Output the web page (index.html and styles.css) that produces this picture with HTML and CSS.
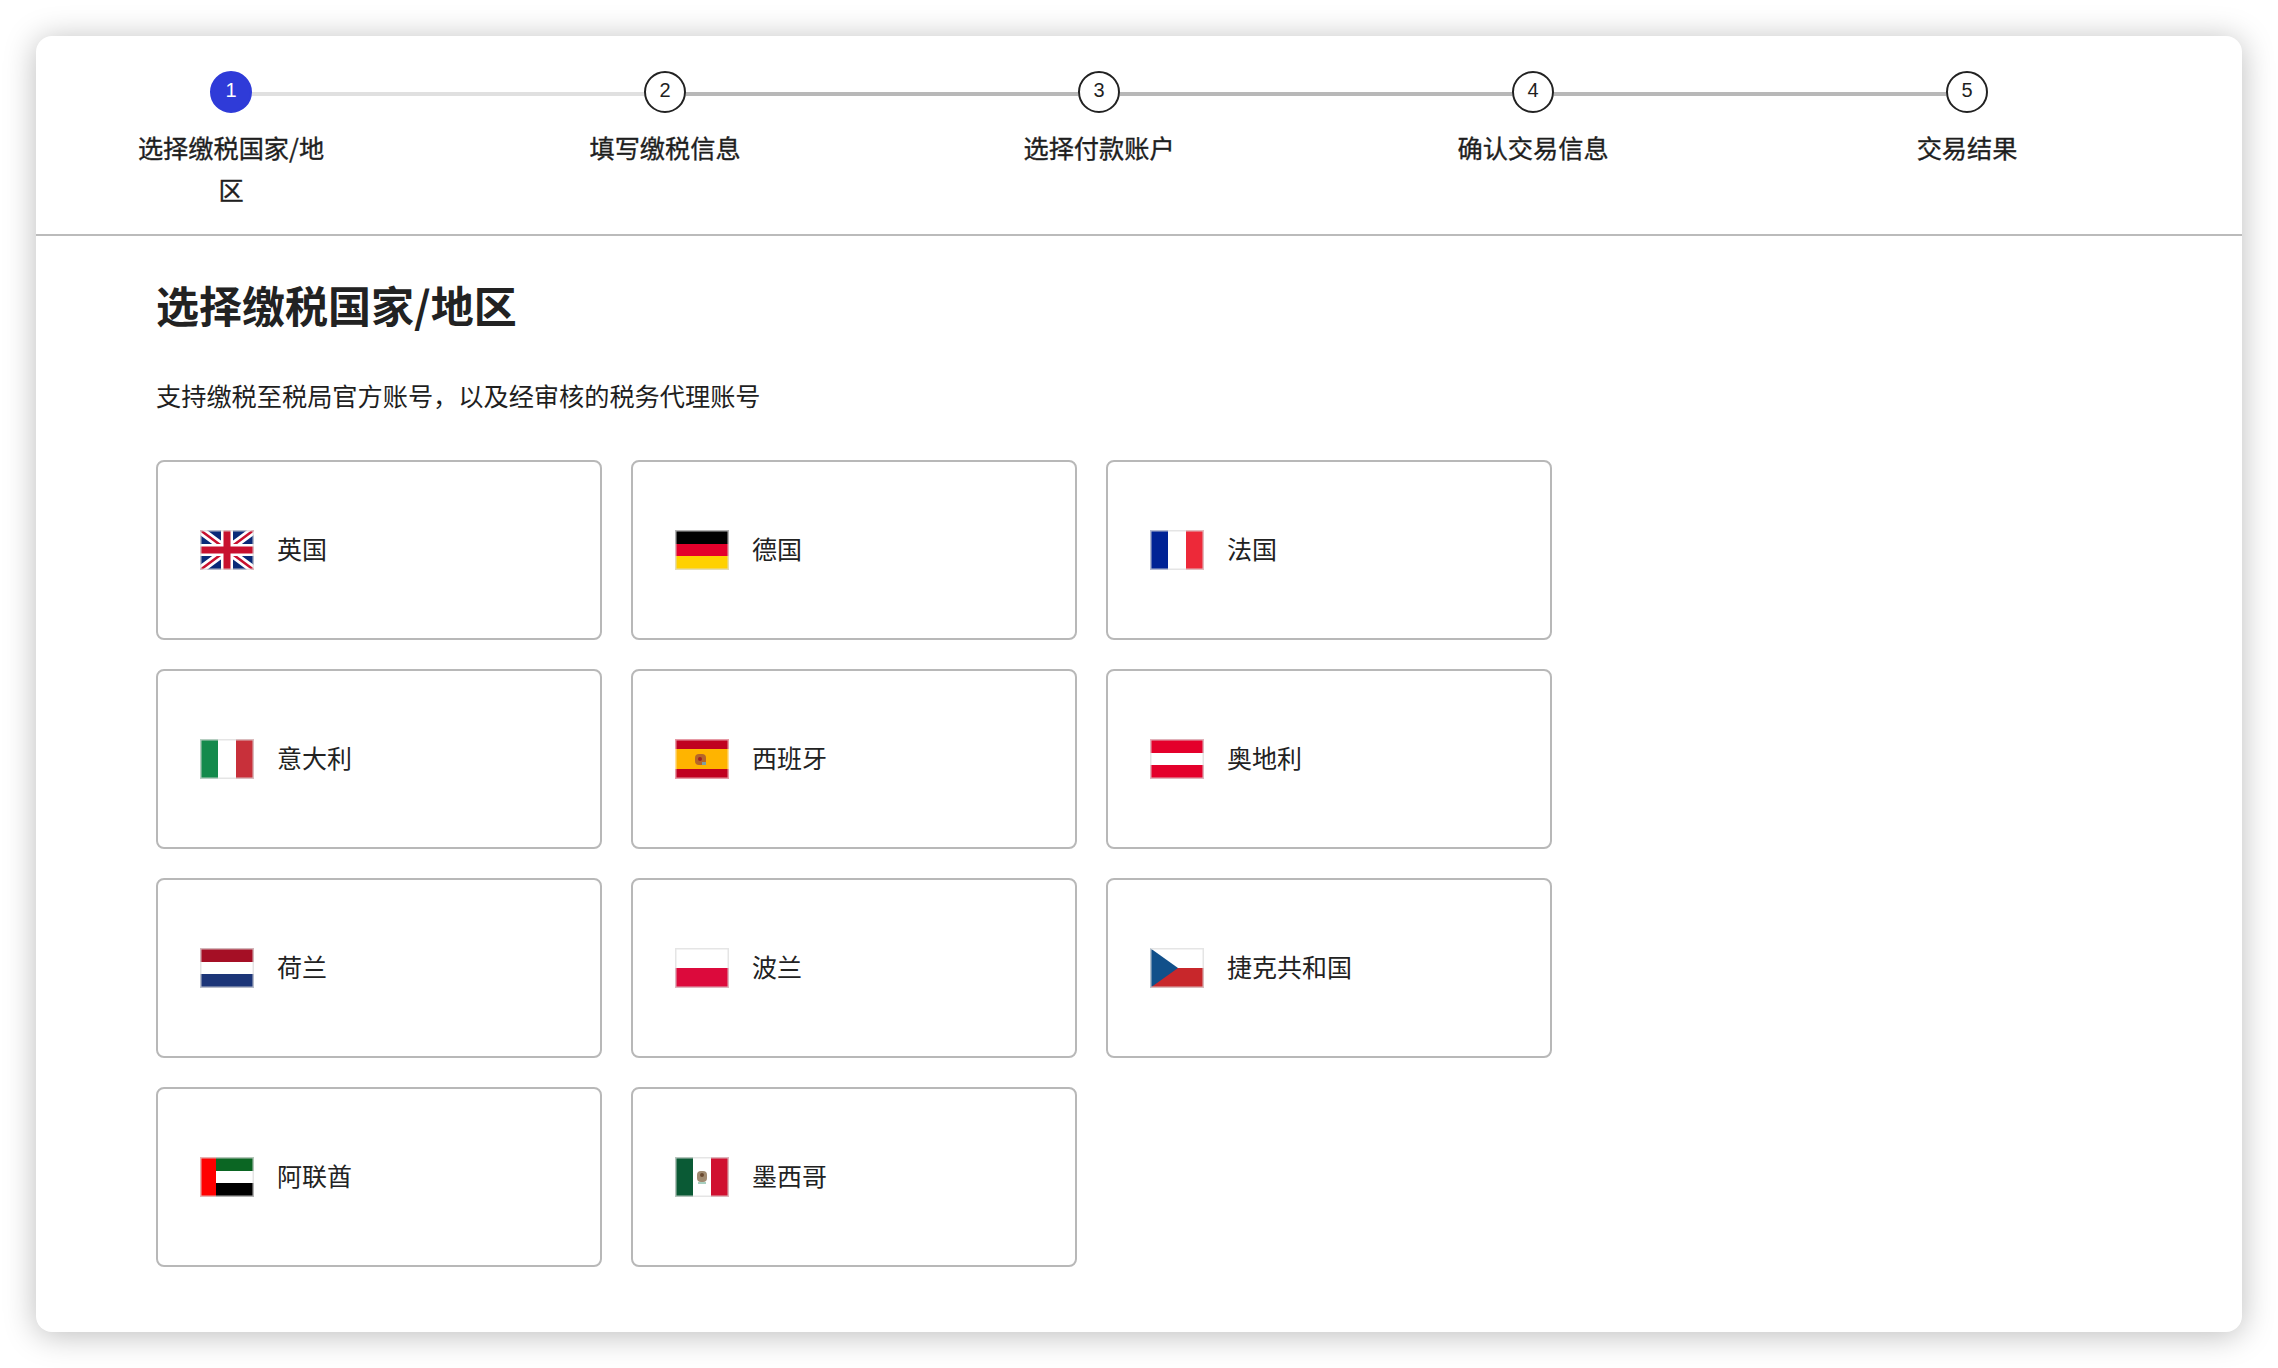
FILE: index.html
```html
<!DOCTYPE html>
<html lang="zh-CN">
<head>
<meta charset="utf-8">
<title>选择缴税国家/地区</title>
<link rel="stylesheet" href="styles.css">
</head>
<body>
<main class="window">
  <header class="steps">
    <div class="step step-active"><div class="step-dot">1</div><div class="step-label">选择缴税国家/地区</div></div>
    <div class="step"><div class="step-dot">2</div><div class="step-label">填写缴税信息</div></div>
    <div class="step"><div class="step-dot">3</div><div class="step-label">选择付款账户</div></div>
    <div class="step"><div class="step-dot">4</div><div class="step-label">确认交易信息</div></div>
    <div class="step step-last"><div class="step-dot">5</div><div class="step-label">交易结果</div></div>
  </header>
  <section class="content">
    <h1 class="title">选择缴税国家/地区</h1>
    <p class="subtitle">支持缴税至税局官方账号，以及经审核的税务代理账号</p>
    <div class="grid">
      <div class="card">
        <svg class="flag" viewBox="0 0 54 40"><rect width="54" height="40" fill="#0a2a78"/><path d="M0 0 54 40M54 0 0 40" stroke="#fff" stroke-width="8"/><path d="M0 0 27 20M54 40 27 20M54 0 27 20M0 40 27 20" stroke="#c8102e" stroke-width="2.6"/><path d="M27 0V40M0 20H54" stroke="#fff" stroke-width="12"/><path d="M27 0V40M0 20H54" stroke="#c8102e" stroke-width="7"/><rect class="edge" x=".75" y=".75" width="52.5" height="38.5"/></svg>
        <span class="name">英国</span>
      </div>
      <div class="card">
        <svg class="flag" viewBox="0 0 54 40"><rect width="54" height="14" fill="#000"/><rect y="14" width="54" height="12" fill="#e4002b"/><rect y="26" width="54" height="14" fill="#ffd100"/><rect class="edge" x=".75" y=".75" width="52.5" height="38.5"/></svg>
        <span class="name">德国</span>
      </div>
      <div class="card">
        <svg class="flag" viewBox="0 0 54 40"><rect width="18" height="40" fill="#002395"/><rect x="18" width="18" height="40" fill="#fff"/><rect x="36" width="18" height="40" fill="#ed2939"/><rect class="edge" x=".75" y=".75" width="52.5" height="38.5"/></svg>
        <span class="name">法国</span>
      </div>
      <div class="card">
        <svg class="flag" viewBox="0 0 54 40"><rect width="18" height="40" fill="#148a4c"/><rect x="18" width="18" height="40" fill="#fff"/><rect x="36" width="18" height="40" fill="#c8303a"/><rect class="edge" x=".75" y=".75" width="52.5" height="38.5"/></svg>
        <span class="name">意大利</span>
      </div>
      <div class="card">
        <svg class="flag" viewBox="0 0 54 40"><rect width="54" height="10" fill="#c00020"/><rect y="10" width="54" height="20" fill="#ffb400"/><rect y="30" width="54" height="10" fill="#c00020"/><rect x="20" y="15" width="11" height="11" rx="4" fill="#b5662a"/><circle cx="25" cy="20" r="2" fill="#a02020"/><rect x="27" y="23" width="4" height="3" fill="#7fa0a0"/><rect class="edge edge-thin" x=".75" y=".75" width="52.5" height="38.5"/></svg>
        <span class="name">西班牙</span>
      </div>
      <div class="card">
        <svg class="flag" viewBox="0 0 54 40"><rect width="54" height="14" fill="#e4002b"/><rect y="14" width="54" height="12" fill="#fff"/><rect y="26" width="54" height="14" fill="#e4002b"/><rect class="edge" x=".75" y=".75" width="52.5" height="38.5"/></svg>
        <span class="name">奥地利</span>
      </div>
      <div class="card">
        <svg class="flag" viewBox="0 0 54 40"><rect width="54" height="14" fill="#a50f25"/><rect y="14" width="54" height="12" fill="#fff"/><rect y="26" width="54" height="14" fill="#1c3578"/><rect class="edge" x=".75" y=".75" width="52.5" height="38.5"/></svg>
        <span class="name">荷兰</span>
      </div>
      <div class="card">
        <svg class="flag" viewBox="0 0 54 40"><rect width="54" height="20" fill="#fff"/><rect y="20" width="54" height="20" fill="#dc0a3c"/><rect class="edge" x=".75" y=".75" width="52.5" height="38.5"/></svg>
        <span class="name">波兰</span>
      </div>
      <div class="card">
        <svg class="flag" viewBox="0 0 54 40"><rect width="54" height="20" fill="#fff"/><rect y="20" width="54" height="20" fill="#c8272b"/><path d="M0 0 28 20 0 40Z" fill="#11508a"/><rect class="edge" x=".75" y=".75" width="52.5" height="38.5"/></svg>
        <span class="name">捷克共和国</span>
      </div>
      <div class="card">
        <svg class="flag" viewBox="0 0 54 40"><rect width="16" height="40" fill="#f00"/><rect x="16" width="38" height="14" fill="#0b6623"/><rect x="16" y="14" width="38" height="12" fill="#fff"/><rect x="16" y="26" width="38" height="14" fill="#000"/><rect class="edge" x=".75" y=".75" width="52.5" height="38.5"/></svg>
        <span class="name">阿联酋</span>
      </div>
      <div class="card">
        <svg class="flag" viewBox="0 0 54 40"><rect width="18" height="40" fill="#0a5a35"/><rect x="18" width="18" height="40" fill="#fff"/><rect x="36" width="18" height="40" fill="#d01030"/><rect x="22" y="14" width="10" height="11" rx="4" fill="#a08a70"/><circle cx="27" cy="18" r="2" fill="#6a4a30"/><path d="M23 25h8v2h-8z" fill="#a8cfc0"/><rect class="edge" x=".75" y=".75" width="52.5" height="38.5"/></svg>
        <span class="name">墨西哥</span>
      </div>
    </div>
  </section>
</main>
</body>
</html>
```
FILE: styles.css
```css
* { box-sizing: border-box; }
html, body { margin: 0; background: #fff; }
body {
  padding: 36px;
  font-family: "Noto Sans CJK SC", "Liberation Sans", sans-serif;
  color: #1f1f1f;
}
.window {
  width: 2206px;
  height: 1296px;
  background: #fff;
  border-radius: 16px;
  box-shadow: 0 3px 32px rgba(0, 0, 0, .27);
  overflow: hidden;
}
.steps {
  display: flex;
  gap: 244px;
  padding: 35px 0 22px 100px;
  border-bottom: 2px solid #bbb;
  height: 200px;
}
.step {
  position: relative;
  width: 190px;
  display: flex;
  flex-direction: column;
  align-items: center;
}
.step::after {
  content: "";
  position: absolute;
  top: 21px;
  left: 116px;
  width: 392px;
  height: 4px;
  background: #b8b8b8;
}
.step-active::after { background: #e0e0e0; }
.step-last::after { display: none; }
.step-dot {
  width: 42px;
  height: 42px;
  border: 2px solid #222;
  border-radius: 50%;
  display: flex;
  align-items: center;
  justify-content: center;
  font-family: "Liberation Sans", sans-serif;
  font-size: 20px;
  padding-bottom: 3px;
  background: #fff;
}
.step-active .step-dot {
  background: #2f3bd8;
  border-color: #2f3bd8;
  color: #fff;
}
.step-label {
  margin-top: 13px;
  font-size: 25.2px;
  font-weight: 400;
  -webkit-text-stroke: .35px #1f1f1f;
  line-height: 42px;
  text-align: center;
}
.content { padding: 0 0 0 120px; }
.title {
  margin: 43px 0 0;
  font-size: 43px;
  font-weight: 700;
  line-height: 50px;
  color: #222;
}
.subtitle {
  margin: 48px 0 0;
  font-size: 25.2px;
  line-height: 36px;
}
.grid {
  display: grid;
  grid-template-columns: repeat(3, 446px);
  grid-auto-rows: 180px;
  column-gap: 29px;
  row-gap: 29px;
  margin-top: 47px;
}
.card {
  display: flex;
  align-items: center;
  gap: 23px;
  padding-left: 42px;
  border: 2px solid #b8b8b8;
  border-radius: 8px;
}
.flag { width: 54px; height: 40px; flex: none; }
.edge { fill: none; stroke: rgba(222, 222, 222, .8); stroke-width: 1.5; }
.edge-thin { stroke: rgba(255, 255, 255, .6); }
.name { font-size: 25px; color: #222; padding-bottom: 4px; }
```
